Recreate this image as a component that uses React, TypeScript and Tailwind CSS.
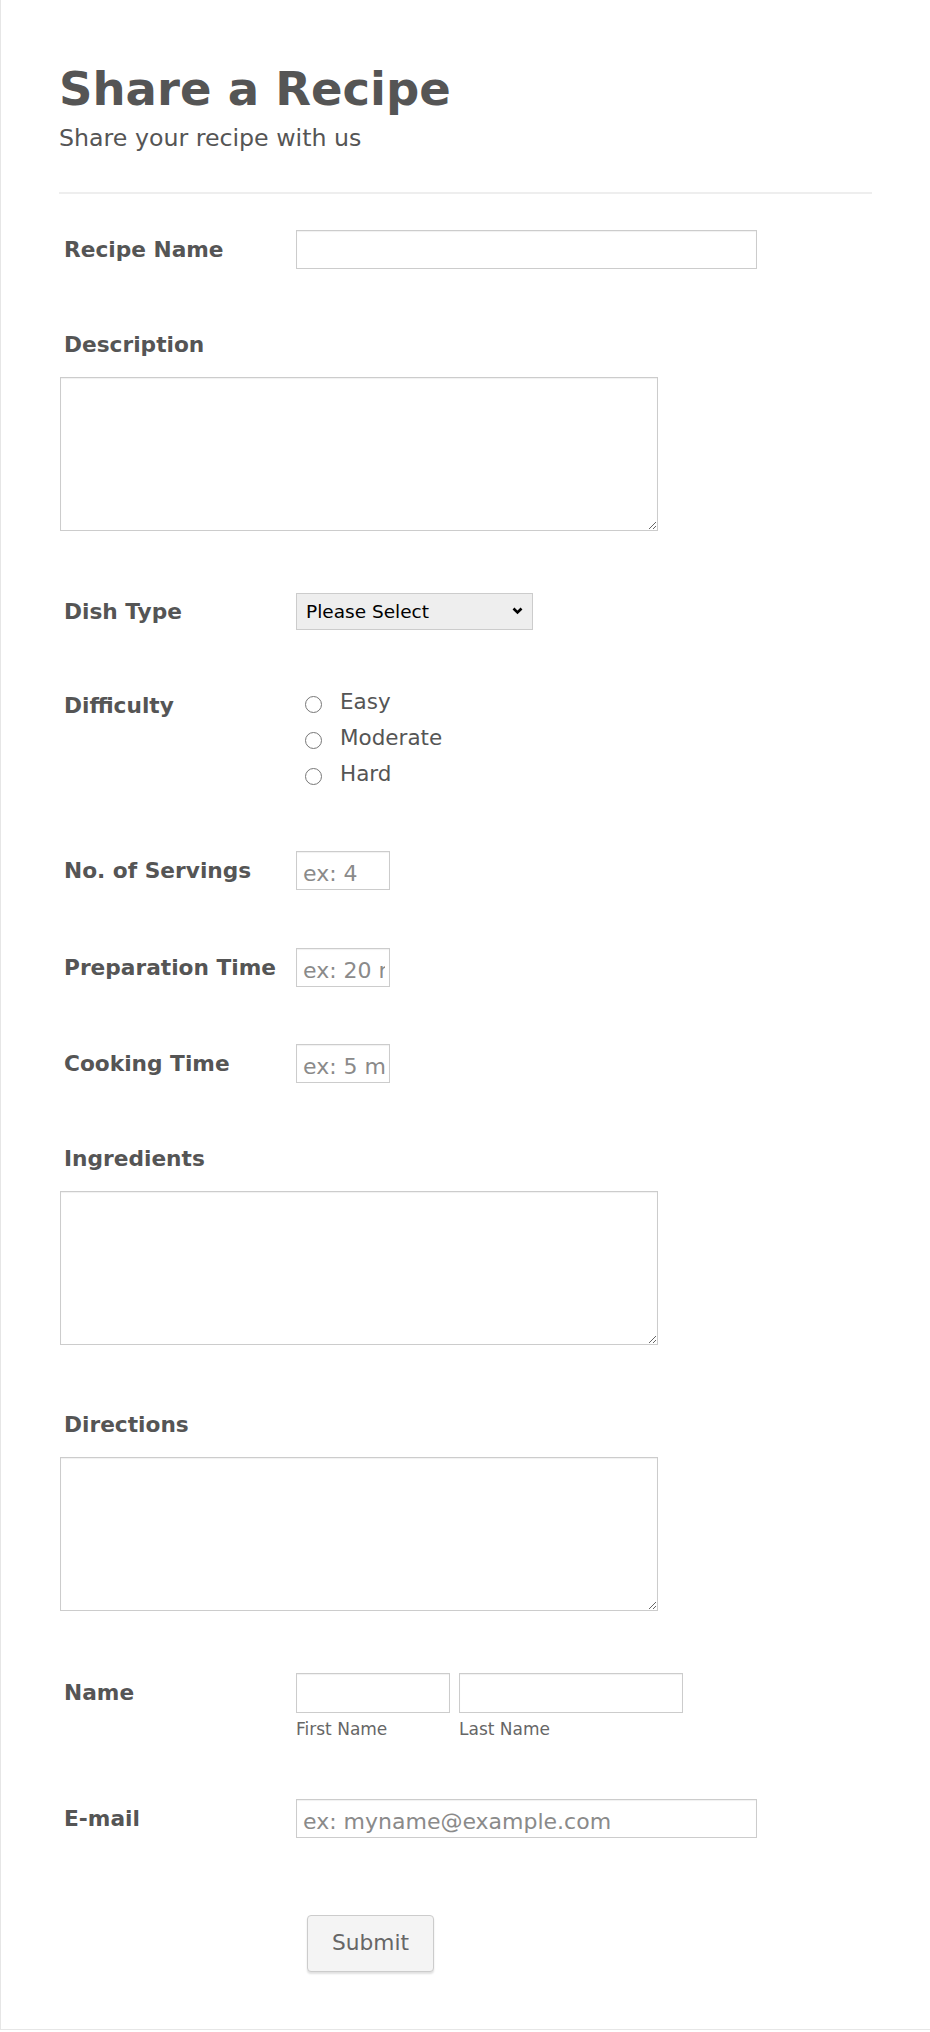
import { useState } from 'react';

const labelCls = "w-[237px] shrink-0 pl-[5px] font-bold text-[21.7px] leading-[26px] text-[#555]";
const inputCls = "h-[39px] border border-[#cccccc] bg-white pl-[6px] pr-[4px] pt-[6px] text-[22px] text-[#555] placeholder:text-[#8a8a8a] outline-none shadow-[inset_0_1px_1px_rgba(0,0,0,0.06)]";
const areaCls = "ml-px block w-[598px] h-[154px] border border-[#cccccc] bg-white text-[18px] outline-none shadow-[inset_0_1px_1px_rgba(0,0,0,0.06)]";

function Radio({ label, name, value, checked, onPick }: { label: string; name: string; value: string; checked: boolean; onPick: (v: string) => void }) {
  return (
    <label className="flex h-[36px] items-center cursor-pointer" onClick={() => onPick(value)}>
      <span className="ml-[9px] mt-[5px] flex h-[17px] w-[17px] items-center justify-center rounded-full border border-[#777] bg-white">
        {checked && <span className="h-[9px] w-[9px] rounded-full bg-[#555]" />}
      </span>
      <span className="ml-[18px] text-[21.5px] text-[#555]">{label}</span>
      <input type="radio" name={name} value={value} className="hidden" readOnly checked={checked} />
    </label>
  );
}

export default function App() {
  const [difficulty, setDifficulty] = useState("");

  return (
    <div className="min-h-screen bg-white">
      <div className="border-l border-b border-[#e6e6e6] px-[58px] pt-[62px] pb-[57px] font-['DejaVu_Sans',Verdana,sans-serif] text-[#555]">
        <h1 className="text-[46.5px] leading-[55px] font-bold text-[#555]">Share a Recipe</h1>
        <p className="mt-[7px] text-[23.7px] leading-[28px] text-[#555]">Share your recipe with us</p>
        <div className="mt-[40px] h-[2px] bg-[#eeeeee]" />

        {/* recipe name */}
        <div className="mt-[36px] flex items-center">
          <div className={labelCls}>Recipe Name</div>
          <input className={`${inputCls} w-[461px]`} />
        </div>

        {/* description */}
        <div className="mt-[63px]">
          <div className={labelCls}>Description</div>
          <textarea className={`${areaCls} mt-[19px]`} />
        </div>

        {/* dish type */}
        <div className="mt-[62px] flex items-center">
          <div className={labelCls}>Dish Type</div>
          <div className="relative">
            <select className="block h-[37px] w-[237px] appearance-none border border-[#cccccc] bg-[#eeeeee] pl-[9px] text-[18.5px] text-black outline-none">
              <option>Please Select</option>
              <option>Appetizer</option>
              <option>Main Course</option>
              <option>Side Dish</option>
              <option>Dessert</option>
            </select>
            <svg className="pointer-events-none absolute right-[10px] top-[14px]" width="11" height="8" viewBox="0 0 11 8">
              <path d="M1.5 1.5 L5.5 5.5 L9.5 1.5" fill="none" stroke="#000" strokeWidth="2.6" />
            </svg>
          </div>
        </div>

        {/* difficulty */}
        <div className="mt-[54px] flex items-start">
          <div className={`${labelCls} mt-[9px]`}>Difficulty</div>
          <div className="flex flex-col">
            {["Easy", "Moderate", "Hard"].map(d => (
              <Radio key={d} label={d} name="difficulty" value={d} checked={difficulty === d} onPick={setDifficulty} />
            ))}
          </div>
        </div>

        {/* servings / times */}
        <div className="mt-[59px] flex items-center">
          <div className={labelCls}>No. of Servings</div>
          <input className={`${inputCls} w-[94px]`} placeholder="ex: 4" />
        </div>
        <div className="mt-[58px] flex items-center">
          <div className={labelCls}>Preparation Time</div>
          <input className={`${inputCls} w-[94px]`} placeholder="ex: 20 minutes" />
        </div>
        <div className="mt-[57px] flex items-center">
          <div className={labelCls}>Cooking Time</div>
          <input className={`${inputCls} w-[94px]`} placeholder="ex: 5 minutes" />
        </div>

        {/* ingredients */}
        <div className="mt-[63px]">
          <div className={labelCls}>Ingredients</div>
          <textarea className={`${areaCls} mt-[19px]`} />
        </div>

        {/* directions */}
        <div className="mt-[67px]">
          <div className={labelCls}>Directions</div>
          <textarea className={`${areaCls} mt-[19px]`} />
        </div>

        {/* name */}
        <div className="mt-[62px] flex items-start">
          <div className={`${labelCls} flex h-[40px] items-center`}>Name</div>
          <div className="flex gap-[9px]">
            <div className="flex flex-col">
              <input className={`${inputCls} h-[40px] w-[154px]`} />
              <span className="mt-[6px] text-[17px] leading-[20px] text-[#666]">First Name</span>
            </div>
            <div className="flex flex-col">
              <input className={`${inputCls} h-[40px] w-[224px]`} />
              <span className="mt-[6px] text-[17px] leading-[20px] text-[#666]">Last Name</span>
            </div>
          </div>
        </div>

        {/* email */}
        <div className="mt-[60px] flex items-center">
          <div className={labelCls}>E-mail</div>
          <input type="email" className={`${inputCls} h-[38px] w-[461px]`} placeholder="ex: myname@example.com" />
        </div>

        <div className="mt-[77px] pl-[248px]">
          <button className="h-[57px] w-[127px] rounded-[4px] border border-[#cccccc] bg-[#f4f4f4] text-[21.7px] text-[#666] shadow-[0_2px_2px_rgba(0,0,0,0.12)]">
            Submit
          </button>
        </div>
      </div>
    </div>
  );
}
